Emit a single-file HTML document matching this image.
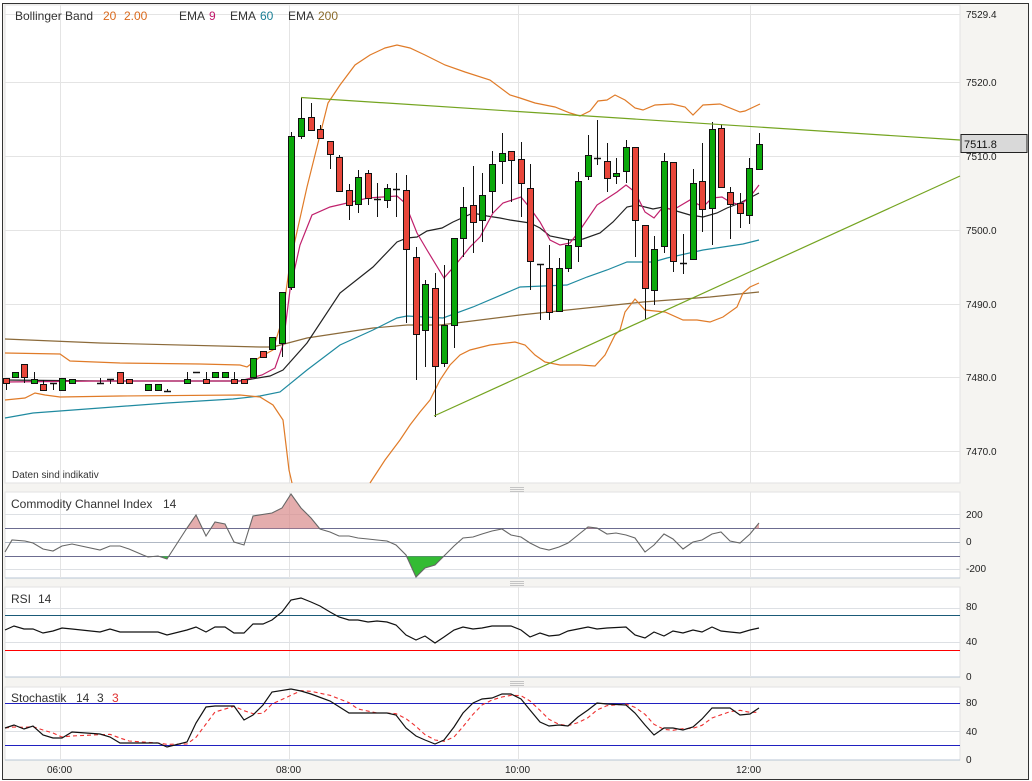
<!DOCTYPE html>
<html><head><meta charset="utf-8"><style>
html,body{margin:0;padding:0;background:#fff;width:1032px;height:781px;overflow:hidden}
svg{display:block;font-family:"Liberation Sans",Arial,sans-serif}
</style></head><body>
<svg id="s" width="1032" height="781" xmlns="http://www.w3.org/2000/svg">
<rect x="0" y="0" width="1032" height="781" fill="#fff"/>
<rect x="3" y="4" width="1025" height="775" fill="#f5f4f1"/>
<rect x="5" y="5" width="955" height="478" fill="#fff" stroke="#e2e2e2"/>
<rect x="5" y="492" width="955" height="86" fill="#fff" stroke="#e2e2e2"/>
<rect x="5" y="587" width="955" height="90" fill="#fff" stroke="#e2e2e2"/>
<rect x="5" y="687" width="955" height="73" fill="#fff" stroke="#e2e2e2"/>
<line x1="5" y1="578" x2="960" y2="578" stroke="#b8c6d4"/>
<line x1="5" y1="677" x2="960" y2="677" stroke="#b8c6d4"/>
<line x1="5" y1="760" x2="960" y2="760" stroke="#b8c6d4"/>
<g id="grid" stroke="#e4e4e4" stroke-width="1"></g>
<g id="ind"></g>
<g id="cd"></g>
<line x1="301" y1="97.5" x2="960" y2="140" stroke="#74a420" stroke-width="1.2"/>
<line x1="434" y1="416" x2="960" y2="176" stroke="#74a420" stroke-width="1.2"/>
<g font-size="12" fill="#333">
<text x="15" y="20">Bollinger Band</text><text x="103" y="20" fill="#d9691c">20</text><text x="124" y="20" fill="#d9691c">2.00</text>
<text x="179" y="20">EMA</text><text x="209" y="20" fill="#c0186a">9</text>
<text x="230" y="20">EMA</text><text x="260" y="20" fill="#1a7f95">60</text>
<text x="288" y="20">EMA</text><text x="318" y="20" fill="#8a6a2a">200</text>
<text x="11" y="508">Commodity Channel Index</text><text x="163" y="508">14</text>
<text x="11" y="603">RSI</text><text x="38" y="603">14</text>
<text x="11" y="702">Stochastik</text><text x="76" y="702">14</text><text x="97" y="702">3</text><text x="112" y="702" fill="#e03030">3</text>
</g>
<text x="12" y="478" font-size="10" fill="#333">Daten sind indikativ</text>
<g font-size="10" fill="#222">
<text x="966" y="18">7529.4</text><text x="966" y="86">7520.0</text><text x="966" y="160">7510.0</text>
<text x="966" y="234">7500.0</text><text x="966" y="308">7490.0</text><text x="966" y="381">7480.0</text><text x="966" y="455">7470.0</text>
<text x="966" y="518">200</text><text x="966" y="545">0</text><text x="966" y="572">-200</text>
<text x="966" y="610">80</text><text x="966" y="645">40</text><text x="966" y="680">0</text>
<text x="966" y="706">80</text><text x="966" y="735">40</text><text x="966" y="763">0</text>
<text x="47" y="773">06:00</text><text x="276" y="773">08:00</text><text x="505" y="773">10:00</text><text x="736" y="773">12:00</text>
</g>
<rect x="961" y="134.5" width="66" height="18" fill="#d9d9d9" stroke="#222"/>
<text x="964" y="148" font-size="11" fill="#111">7511.8</text>
<g fill="#c4c4c4"><rect x="510" y="487" width="14" height="1"/><rect x="510" y="489" width="14" height="1"/><rect x="510" y="491" width="14" height="1"/>
<rect x="510" y="581" width="14" height="1"/><rect x="510" y="583" width="14" height="1"/><rect x="510" y="585" width="14" height="1"/>
<rect x="510" y="681" width="14" height="1"/><rect x="510" y="683" width="14" height="1"/><rect x="510" y="685" width="14" height="1"/></g>
<rect x="2.5" y="3.5" width="1026" height="776" fill="none" stroke="#333"/>
</svg>
<script>
var NS="http://www.w3.org/2000/svg";
function el(p,t,a){var e=document.createElementNS(NS,t);for(var k in a)e.setAttribute(k,a[k]);document.getElementById(p).appendChild(e);return e;}
function pts(a){return a.map(function(p){return p[0]+","+p[1]}).join(" ");}
function pl(p,a,c,w,extra){var o={points:pts(a),fill:"none",stroke:c,"stroke-width":w||1};for(var k in extra)o[k]=extra[k];return el(p,"polyline",o);}
[14,82,156,230,304,377,451].forEach(function(y){el("grid","line",{x1:5,x2:960,y1:y+.5,y2:y+.5});});
[60,289,518,750].forEach(function(x){el("grid","line",{x1:x+.5,x2:x+.5,y1:5,y2:483});el("grid","line",{x1:x+.5,x2:x+.5,y1:492,y2:578});el("grid","line",{x1:x+.5,x2:x+.5,y1:587,y2:677});el("grid","line",{x1:x+.5,x2:x+.5,y1:687,y2:760});});
[514,542,569,608,642,731].forEach(function(y){el("grid","line",{x1:5,x2:960,y1:y+.5,y2:y+.5,stroke:"#dde0e4"});});
el("ind","line",{x1:5,x2:960,y1:528.5,y2:528.5,stroke:"#6c6c90"});
el("ind","line",{x1:5,x2:960,y1:556.5,y2:556.5,stroke:"#6c6c90"});
el("ind","line",{x1:5,x2:960,y1:542.5,y2:542.5,stroke:"#b0b8c4"});
el("ind","line",{x1:5,x2:960,y1:615.5,y2:615.5,stroke:"#1a5a78"});
el("ind","line",{x1:5,x2:960,y1:650.5,y2:650.5,stroke:"#ff0000"});
el("ind","line",{x1:5,x2:960,y1:703.5,y2:703.5,stroke:"#2020c0"});
el("ind","line",{x1:5,x2:960,y1:745.5,y2:745.5,stroke:"#2020c0"});
var up=[[5,353],[60,354],[70,361],[120,363],[200,364],[240,365],[247,367],[260,357],[273,350],[282,320],[290,263],[307,187],[328,103],[340,85],[355,65],[370,55],[385,48],[397,45],[410,48],[425,55],[445,65],[465,72],[490,80],[510,95],[520,98],[535,103],[555,107],[570,113],[580,116],[590,111],[598,101],[607,100],[615,95],[625,100],[635,108],[643,110],[655,105],[672,104],[685,107],[693,115],[703,105],[720,104],[740,112],[745,111],[760,104]];
var lo=[[5,400],[25,398],[35,393],[45,395],[60,397],[120,396],[240,395],[260,397],[273,405],[283,420],[289,470],[292,483]];
var lo2=[[370,483],[385,460],[400,440],[410,425],[420,412],[430,400],[440,380],[450,365],[460,355],[470,350],[490,345],[515,342],[525,345],[535,355],[545,362],[560,365],[580,365],[595,366],[605,355],[615,335],[620,330],[625,312],[635,299],[645,310],[665,312],[683,320],[697,320],[710,322],[723,317],[737,307],[743,293],[750,287],[759,283]];
var brown=[[5,339],[100,343],[260,347],[273,347],[307,338],[373,328],[407,325],[440,325],[520,315],[577,309],[643,302],[710,297],[759,292]];
var teal=[[5,418],[33,413],[100,408],[167,403],[233,399],[260,396],[280,392],[307,370],[340,345],[373,330],[397,318],[407,316],[443,318],[473,307],[520,287],[567,285],[587,277],[607,270],[627,262],[653,262],[667,258],[703,250],[743,244],[759,240]];
var blk=[[5,380],[100,381],[240,381],[270,376],[283,370],[307,343],[340,293],[373,267],[397,242],[407,238],[417,237],[427,231],[442,228],[453,222],[473,213],[487,216],[500,218],[510,220],[530,223],[540,228],[550,236],[570,240],[583,239],[600,233],[613,222],[627,207],[637,205],[653,209],[663,207],[673,210],[690,215],[703,217],[717,213],[727,208],[740,203],[759,193]];
var mag=[[5,382],[100,381],[240,381],[262,375],[275,368],[283,345],[290,290],[300,245],[312,215],[330,207],[343,204],[368,198],[397,196],[405,203],[417,233],[427,250],[444,278],[457,263],[470,247],[480,237],[493,213],[503,203],[521,197],[530,208],[540,222],[550,240],[560,245],[570,243],[580,230],[597,205],[617,192],[626,185],[635,192],[645,212],[654,218],[663,207],[673,210],[690,200],[703,207],[712,198],[722,197],[730,202],[740,205],[750,197],[759,185]];
pl("ind",brown,"#8b6a3a",1.2);pl("ind",teal,"#1f8aa0",1.2);pl("ind",up,"#e07b28",1.2);pl("ind",lo,"#e07b28",1.2);pl("ind",lo2,"#e07b28",1.2);pl("ind",blk,"#222",1.2);pl("ind",mag,"#c0206c",1.2);
var C=[[6,378,383,378,390],[15,377,372,372,377],[24,364,377,364,383],[34,383,379,372,383],[43,384,390,380,390],[53,383,383,383,390],[62,390,378,378,390],[72,383,379,379,383],[100,383,383,378,384],[110,379,379,379,384],[120,372,383,372,383],[129,379,383,379,383],[148,390,384,384,390],[158,390,384,384,390],[167,391,391,389,391],[187,383,379,372,383],[196,372,372,372,372],[206,379,383,372,383],[215,377,372,372,377],[225,377,372,372,377],[234,379,383,372,383],[244,379,383,379,383],[253,377,358,358,377],[263,351,357,351,357],[272,349,337,337,349],[282,343,292,292,357],[291,287,136,132,290],[301,136,118,97,139],[311,117,130,103,130],[320,129,138,125,138],[330,141,154,141,169],[339,157,191,155,191],[349,190,205,184,220],[358,204,177,170,213],[368,173,198,170,205],[377,199,199,183,217],[387,200,188,184,208],[396,189,189,173,217],[406,190,249,175,323],[416,257,334,247,380],[425,330,284,280,367],[435,288,366,273,417],[444,363,325,265,367],[454,325,238,238,348],[463,238,207,187,257],[473,205,222,166,253],[482,220,195,173,242],[492,191,164,151,213],[502,161,153,133,184],[511,151,160,151,202],[521,159,183,142,217],[530,188,261,164,290],[540,264,264,264,320],[549,268,312,245,320],[559,311,268,258,311],[568,268,245,239,272],[578,246,181,172,262],[588,176,155,135,180],[597,158,158,120,165],[607,161,178,143,192],[616,176,173,158,184],[626,171,147,140,183],[635,147,220,147,257],[645,225,288,225,320],[654,290,249,236,305],[664,246,161,153,253],[673,162,261,162,272],[683,263,263,234,274],[693,259,183,169,259],[702,181,209,143,232],[712,208,129,122,245],[721,128,187,124,187],[730,192,204,187,239],[740,203,213,193,228],[749,215,168,158,224],[759,169,144,133,169]];
C.forEach(function(c){var x=c[0];el("cd","line",{x1:x+.5,x2:x+.5,y1:c[3],y2:c[4],stroke:"#111"});
var t=Math.min(c[1],c[2]),b=Math.max(c[1],c[2]);
if(b-t<1.5){el("cd","line",{x1:x-3,x2:x+4,y1:t+.5,y2:t+.5,stroke:"#111","stroke-width":1.5});}
else el("cd","rect",{x:x-2.5,y:t+.5,width:6,height:b-t,fill:c[2]<c[1]?"#0aa80a":"#e8463a",stroke:"#111"});});
var cci=[[5,552],[12,540],[25,541],[33,543],[43,549],[53,551],[62,546],[72,544],[100,550],[110,546],[120,546],[129,549],[143,555],[148,557],[158,556],[167,559],[187,528],[196,515],[206,536],[215,522],[225,524],[234,542],[244,545],[253,516],[272,513],[282,508],[291,494],[301,508],[311,518],[320,529],[330,532],[339,536],[349,536],[358,538],[368,539],[377,540],[387,541],[396,545],[406,555],[416,577],[425,568],[435,565],[444,556],[454,546],[463,538],[473,537],[482,534],[492,531],[502,529],[511,535],[521,537],[530,543],[540,548],[549,550],[559,547],[568,543],[578,535],[588,527],[597,528],[607,534],[616,533],[626,535],[635,538],[645,552],[654,545],[664,534],[673,539],[683,549],[693,542],[702,540],[712,534],[721,532],[730,541],[740,543],[750,534],[759,523]];
var defs=el("s","defs",{});
var cp1=document.createElementNS(NS,"clipPath");cp1.setAttribute("id","ca");defs.appendChild(cp1);var r1=document.createElementNS(NS,"rect");r1.setAttribute("x",5);r1.setAttribute("y",490);r1.setAttribute("width",960);r1.setAttribute("height",38.5);cp1.appendChild(r1);
var cp2=document.createElementNS(NS,"clipPath");cp2.setAttribute("id","cb");defs.appendChild(cp2);var r2=document.createElementNS(NS,"rect");r2.setAttribute("x",5);r2.setAttribute("y",556.5);r2.setAttribute("width",960);r2.setAttribute("height",30);cp2.appendChild(r2);
el("ind","polygon",{points:pts([[5,528.5]].concat(cci).concat([[759,528.5]])),fill:"#d98a8a","fill-opacity":"0.7","clip-path":"url(#ca)"});
el("ind","polygon",{points:pts([[5,556.5]].concat(cci).concat([[759,556.5]])),fill:"#33bb33","clip-path":"url(#cb)"});
pl("ind",cci,"#666",1.1);
var rsi=[[5,630],[14,626],[24,629],[33,629],[43,633],[53,631],[62,628],[72,629],[100,632],[110,629],[120,632],[129,632],[158,632],[167,635],[187,630],[196,627],[206,632],[215,627],[225,627],[234,633],[244,633],[253,624],[263,624],[272,620],[282,612],[291,600],[301,598],[311,602],[320,606],[330,612],[339,617],[349,620],[358,620],[368,622],[377,621],[387,622],[396,625],[406,635],[416,640],[425,636],[435,643],[444,637],[454,630],[463,627],[473,629],[482,628],[492,626],[511,626],[521,630],[530,637],[540,633],[549,636],[559,635],[568,631],[578,629],[588,627],[597,629],[607,628],[626,627],[635,635],[645,638],[654,632],[664,636],[673,631],[683,633],[693,630],[702,632],[712,627],[721,631],[730,632],[740,633],[750,630],[759,628]];
pl("ind",rsi,"#111",1.2);
var st=[[5,728],[14,725],[24,729],[33,726],[43,735],[53,738],[62,738],[72,732],[100,734],[110,737],[120,743],[129,743],[158,743],[167,747],[187,742],[196,723],[206,707],[215,706],[234,706],[244,720],[253,715],[263,705],[272,692],[291,689],[301,691],[311,694],[330,701],[349,713],[358,713],[377,713],[387,713],[396,715],[406,728],[416,736],[425,740],[435,744],[444,740],[454,727],[463,713],[473,703],[482,699],[492,698],[502,694],[511,694],[521,699],[530,710],[540,722],[549,726],[559,725],[568,726],[578,717],[588,710],[597,703],[607,704],[626,705],[635,713],[645,725],[654,735],[664,728],[673,728],[683,730],[693,727],[702,719],[712,708],[730,708],[740,715],[750,714],[759,708]];
var sd=st.map(function(p,i){var a=st[Math.max(0,i-1)][1],b=st[Math.max(0,i-2)][1];return [p[0],(p[1]+a+b)/3];});
pl("ind",sd,"#ee3030",1.1,{"stroke-dasharray":"4,3"});
pl("ind",st,"#111",1.2);
</script>
</body></html>
